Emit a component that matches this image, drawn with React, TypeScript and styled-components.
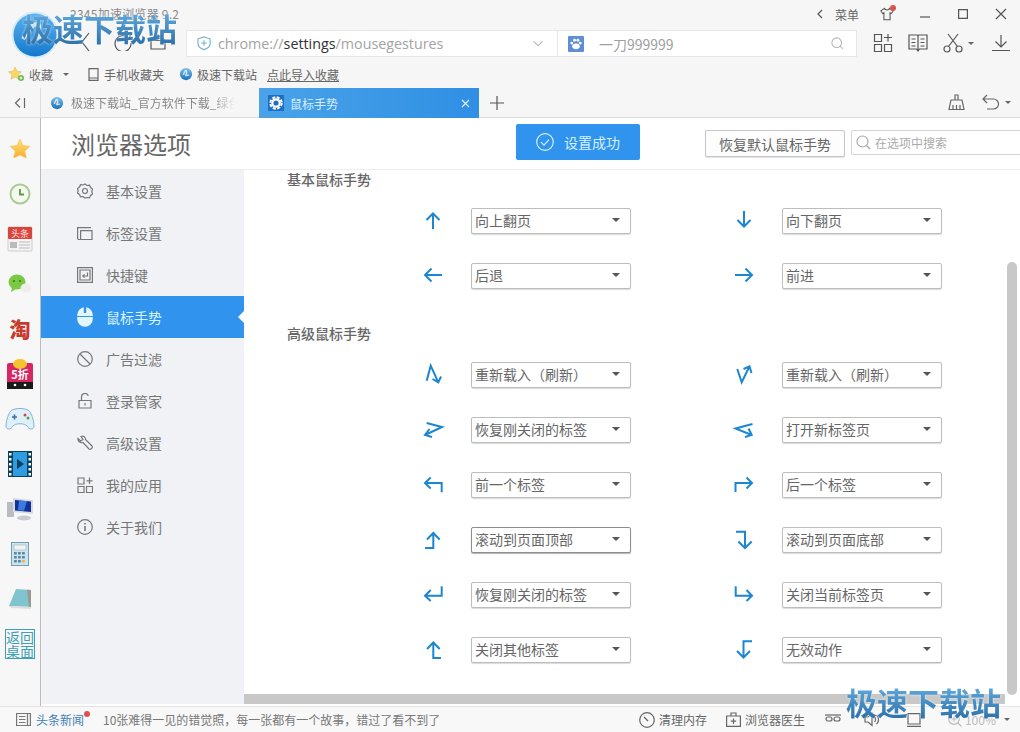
import React from "react";
import styled, { createGlobalStyle } from "styled-components";

const Global = createGlobalStyle`
  html, body { margin: 0; padding: 0; background: #f6f6f6; }
  body { font-family: "Noto Sans CJK SC", "Noto Sans", sans-serif; color: #666; }
  * { box-sizing: border-box; }
`;

const Page = styled.div`
  position: relative; width: 1020px; height: 732px; overflow: hidden;
  display: flex; flex-direction: column; background: #f6f6f6;
`;
const TitleRow = styled.div`
  height: 28px; display: flex; align-items: center; padding-left: 70px; flex: none;
`;
const AppTitle = styled.div`font-size: 12px; color: #888; line-height: 28px; letter-spacing: .25px;`;
const WindowControls = styled.div`
  margin-left: auto; display: flex; align-items: center; height: 28px; color: #555;
`;
const MenuLabel = styled.span`font-size: 12px; color: #666; margin: 0 21px 0 10px;`;
const SkinWrap = styled.span`position: relative; display: inline-flex; margin-right: 12px;`;
const RedDot = styled.span<{ $size: number }>`
  position: absolute; right: -2px; top: -2px; width: ${p => p.$size}px; height: ${p => p.$size}px;
  background: #d9534f; border-radius: 50%;
`;
const WinButton = styled.span`width: 38px; height: 28px; display: flex; align-items: center; justify-content: center;`;

const ToolRow = styled.div`
  height: 32px; display: flex; align-items: flex-start; flex: none; padding-left: 76px; color: #555;
`;
const NavGroup = styled.div`display: flex; gap: 18px; align-items: center; height: 28px; width: 110px; flex: none;`;
const AddressBox = styled.div`
  width: 671px; height: 27px; margin-top: 2px; background: #fff; border: 1px solid #e6e6e6;
  display: flex; align-items: center; flex: none;
`;
const UrlPart = styled.div`
  width: 371px; flex: none; height: 100%; display: flex; align-items: center; padding: 0 11px 0 10px;
  border-right: 1px solid #e6e6e6; color: #74b3c7;
`;
const UrlText = styled.div`
  font-family: "Open Sans", sans-serif; font-size: 14.3px; color: #a3a3a3; margin-left: 6px; flex: 1;
`;
const UrlStrong = styled.span`color: #333;`;
const Dim = styled.span`color: #b5b5b5; display: inline-flex;`;
const SearchPart = styled.div`flex: 1; height: 100%; display: flex; align-items: center; padding: 0 11px 0 10px;`;
const SearchValue = styled.span`font-size: 14px; color: #a0a0a0; margin-left: 15px; flex: 1;`;
const ToolIcons = styled.div`
  display: flex; align-items: center; height: 28px; margin: 1px 0 0 16px; gap: 15px; color: #555;
`;
const ToolCaret = styled.span`
  display: inline-block; border: 3px solid transparent; border-top-color: #666; border-bottom: none;
  margin-left: 5px;
`;
const IconWithCaret = styled.span<{ $after?: number }>`
  display: inline-flex; align-items: center; margin-right: ${p => p.$after ?? 0}px;
`;

const BookmarkRow = styled.div`
  height: 28px; flex: none; display: flex; align-items: center; padding-left: 8px; font-size: 12px; color: #666;
`;
const Bookmark = styled.span<{ $w: number }>`
  display: inline-flex; align-items: center; gap: 4px; width: ${p => p.$w}px;
`;
const BookmarkCaret = styled(ToolCaret)`margin-left: 6px;`;
const Imported = styled.span`text-decoration: underline;`;

const TabRow = styled.div`
  height: 30px; flex: none; display: flex; align-items: stretch; border-bottom: 1px solid #dcdcdc;
`;
const Collapse = styled.div`width: 41px; display: flex; align-items: center; justify-content: center; color: #666; border-right: 1px solid #dcdcdc;`;
const Tab = styled.div`
  width: 218px; display: flex; align-items: center; padding-left: 9px; gap: 7px; font-size: 12px; color: #888;
  overflow: hidden; white-space: nowrap;
`;
const TabFade = styled.span`
  display: block; flex: none;
  -webkit-mask-image: linear-gradient(to right, #000 140px, transparent 164px);
  mask-image: linear-gradient(to right, #000 140px, transparent 164px);
`;
const ActiveTab = styled.div`
  width: 220px; display: flex; align-items: center; padding: 0 9px; gap: 6px; font-size: 12px; color: #d8eeff;
  background: linear-gradient(to right, #4aa3e8, #2f8fe4); margin-bottom: -1px;
`;
const TabClose = styled.span`margin-left: auto; display: flex; color: #dff0ff;`;
const NewTab = styled.div`width: 36px; display: flex; align-items: center; justify-content: center; color: #555;`;
const TabTools = styled.div`margin-left: auto; display: flex; align-items: center; gap: 17px; padding-right: 9px; color: #666;`;

const Body = styled.div`flex: 1; display: flex; min-height: 0;`;
const Rail = styled.div`
  width: 41px; flex: none; border-right: 1px solid #bcbcbc; background: #f7f7f7;
  display: flex; flex-direction: column; padding-top: 8px;
`;
const RailItem = styled.div`height: 45px; flex: none; display: flex; align-items: center; justify-content: center;`;
const TaoGlyph = styled.span`font-size: 21px; font-weight: 900; color: #c93a2e; line-height: 1;`;
const DesktopBox = styled.div`
  width: 30px; height: 30px; border: 1px solid #3f9fb5; color: #3f9fb5; font-size: 14px; line-height: 14px;
  text-align: center; letter-spacing: 0;
`;

const Main = styled.div`flex: 1; display: flex; flex-direction: column; min-width: 0; background: #fff;`;
const OptionsHead = styled.div`
  height: 52px; flex: none; display: flex; align-items: center; padding-left: 30px; border-bottom: 1px solid #eeeeee; background: #fff;
`;
const OptionsTitle = styled.h1`
  margin: 0; width: 445px; flex: none; font-size: 24px; font-weight: 400; color: #666; line-height: 52px;
`;
const SavedBadge = styled.div`
  width: 124px; height: 36px; margin-top: -4px; background: #3094ee; border-radius: 2px; color: #d6f1ff; flex: none;
  display: flex; align-items: center; justify-content: center; gap: 10px; font-size: 14px;
`;
const RestoreButton = styled.button`
  width: 140px; height: 27px; margin-left: 65px; border: 1px solid #c6c6c6; border-radius: 2px; flex: none;
  background: #fdfdfd; font: inherit; font-size: 14px; color: #666; padding: 0;
  box-shadow: 0 1px 1px rgba(0,0,0,.12);
`;
const OptionSearch = styled.div`
  width: 175px; height: 25px; margin-left: 6px; margin-top: -2px; border: 1px solid #d4d4d4; border-radius: 2px;
  display: flex; align-items: center; padding-left: 4px; gap: 4px; font-size: 12px; color: #aaa; flex: none;
`;
const Split = styled.div`flex: 1; display: flex; min-height: 0;`;
const Nav = styled.nav`width: 203px; flex: none; background: #f0f2f6; color: #777;`;
const NavItem = styled.div<{ $active?: boolean }>`
  position: relative; height: 42px; display: flex; align-items: center; padding-left: 36px; gap: 13px; font-size: 14px;
  color: ${p => (p.$active ? "#d9f3ff" : "#777")};
  background: ${p => (p.$active ? "#3094ee" : "transparent")};
  ${p => p.$active && `&::after {
    content: ""; position: absolute; right: 0; top: 15px; border: 6px solid transparent; border-right-color: #fff; border-left: none;
  }`}
`;
const Content = styled.div`position: relative; flex: 1; background: #fff; padding-left: 43px; overflow: hidden;`;
const Heading = styled.h2<{ $top: number }>`
  margin: ${p => p.$top}px 0 0; font-size: 14px; line-height: 16px; font-weight: 500; color: #666;
`;
const Rows = styled.div<{ $top: number }>`margin-top: ${p => p.$top}px; margin-left: 134px;`;
const Row = styled.div`display: grid; grid-template-columns: 311px 311px;`;
const Cell = styled.div`display: flex; align-items: flex-start; height: 55px;`;
const Arrow = styled.svg`
  width: 24px; height: 24px; margin-top: 15px; margin-right: 26px; flex: none;
  fill: none; stroke: #1c86d1; stroke-width: 2; stroke-linejoin: miter;
`;
const Select = styled.div<{ $focus?: boolean }>`
  width: 160px; height: 26px; margin-top: 15px; display: flex; align-items: center; justify-content: space-between;
  padding: 0 10px 2px 3px; font-size: 14px; color: #666; background: #fff; border-radius: 2px;
  border: 1px solid ${p => (p.$focus ? "#8e8e8e" : "#bdbdbd")};
  box-shadow: 0 1px 1px rgba(0,0,0,${p => (p.$focus ? 0.3 : 0.15)});
  white-space: pre;
`;
const SelectCaret = styled.span`border: 4px solid transparent; border-top: 4px solid #555; border-bottom: none; border-left-width: 4.5px; border-right-width: 4.5px;`;
const VScroll = styled.div`
  position: absolute; right: 3px; top: 92px; width: 10px; height: 433px; background: #c8c8c8; border-radius: 5px;
`;
const HScroll = styled.div`
  position: absolute; left: 0; right: 15px; bottom: 0; height: 10px; background: #c8c8c8;
`;
const ScrollGap = styled.div`height: 2px; flex: none;`;

const StatusBar = styled.div`
  height: 26px; flex: none; display: flex; align-items: center; background: #f8f8f8; border-top: 1px solid #e4e4e4;
  padding-left: 16px; font-size: 12px; color: #777;
`;
const NewsLabel = styled.span`position: relative; color: #3f7fb8; margin: 0 19px 0 5px;`;
const NewsDot = styled(RedDot)`right: -6px; top: 0;`;
const StatusRight = styled.div`margin-left: auto; display: flex; align-items: center; padding-right: 10px;`;
const StatusItem = styled.span<{ $gap: number }>`
  display: inline-flex; align-items: center; gap: 4px; margin-left: ${p => p.$gap}px; color: #666;
`;
const Muted = styled.span`color: #bbb; display: inline-flex; align-items: center; gap: 3px;`;

const Watermark = styled.div<{ $left: number; $top: number }>`
  position: absolute; left: ${p => p.$left}px; top: ${p => p.$top}px; font-size: 31px; font-weight: 700; line-height: 36px;
  white-space: nowrap; letter-spacing: 0;
  background: linear-gradient(to bottom, #62aee2, #2c6fa8);
  -webkit-background-clip: text; background-clip: text; color: transparent;
  filter: drop-shadow(0 0 1px rgba(255,255,255,.7));
`;
const Logo = styled.svg`position: absolute; left: 11px; top: 11px; width: 48px; height: 48px;`;

const Line = styled.svg`fill: none; stroke: currentColor; stroke-width: 1.2; flex: none; display: block;`;

const I = ({ s = 16, v = 16, h, d, children }: { s?: number; v?: number; h?: number; d?: string; children?: React.ReactNode }) => (
  <Line width={s} height={h ?? s} viewBox={`0 0 ${v} ${v}`}>
    {d && <path d={d} />}
    {children}
  </Line>
);

const arrows: Record<string, string> = {
  up: "M12 21V5.5M5.5 12L12 5.5L18.5 12",
  down: "M12 3V18.5M5.5 12L12 18.5L18.5 12",
  left: "M21 12H4M10.5 5.5L4 12L10.5 18.5",
  right: "M3 12H20M13.5 5.5L20 12L13.5 18.5",
  nLeft: "M5.7 18.7L9.7 3.7L17.3 20.3M11.5 17L17.3 20.3L20 14.5",
  nRight: "M5.3 7L9.7 20.3L17.5 4.3M11.5 7L17.5 4.3L19.5 11",
  zLeft: "M5.7 6L21 10L4 18M8.5 12L4 18L11 20",
  zRight: "M20.5 7L3.5 11.5L19.7 18M16.5 11.5L19.7 18L13 20",
  backUp: "M20.7 20.3V11H4M9.7 5.5L4 11L9.7 16.5",
  fwdUp: "M3.5 20V11H20M14.5 5.5L20 11L14.5 16.5",
  footLeft: "M4 21H12.3V6.5M6 12.5L12.3 6L18.7 12.5",
  topDown: "M4 4.7H13V21M6.3 14.5L13 21L19.7 14.5",
  enter: "M20.7 4.3V13.7H4M9.7 8L4 13.7L9.7 19",
  hook: "M3.7 4.3V13.7H20M14.5 8L20 13.7L14.5 19",
  footRight: "M20 21H12.3V5.5M6 12L12.3 5.5L18.7 12",
  topRightDown: "M20 4.3H11.5V20.5M5 14L11.5 20.5L18 14",
};

type G = { a: string; t: string; focus?: boolean };
const basic: [G, G][] = [
  [{ a: "up", t: "向上翻页" }, { a: "down", t: "向下翻页" }],
  [{ a: "left", t: "后退" }, { a: "right", t: "前进" }],
];
const advanced: [G, G][] = [
  [{ a: "nLeft", t: "重新载入（刷新）" }, { a: "nRight", t: "重新载入（刷新）" }],
  [{ a: "zLeft", t: "恢复刚关闭的标签" }, { a: "zRight", t: "打开新标签页" }],
  [{ a: "backUp", t: "前一个标签" }, { a: "fwdUp", t: "后一个标签" }],
  [{ a: "footLeft", t: "滚动到页面顶部", focus: true }, { a: "topDown", t: "滚动到页面底部" }],
  [{ a: "enter", t: "恢复刚关闭的标签" }, { a: "hook", t: "关闭当前标签页" }],
  [{ a: "footRight", t: "关闭其他标签" }, { a: "topRightDown", t: "无效动作" }],
];

const GestureRows = ({ rows, top }: { rows: [G, G][]; top: number }) => (
  <Rows $top={top}>
    {rows.map((r, i) => (
      <Row key={i}>
        {r.map((g, j) => (
          <Cell key={j}>
            <Arrow viewBox="0 0 24 24"><path d={arrows[g.a]} /></Arrow>
            <Select $focus={g.focus}>{g.t}<SelectCaret /></Select>
          </Cell>
        ))}
      </Row>
    ))}
  </Rows>
);

const MiniGlobe = ({ s = 16 }: { s?: number }) => (
  <svg width={s} height={s} viewBox="0 0 16 16" style={{ flex: "none" }}>
    <defs><linearGradient id="gl" x1="0" y1="0" x2="0" y2="1"><stop offset="0" stopColor="#7cc0ef" /><stop offset="1" stopColor="#1a6fc0" /></linearGradient></defs>
    <circle cx="8" cy="8" r="7" fill="url(#gl)" />
    <path d="M5 9c1-3 2-5 3-5s1 3 0 5 3-1 3 1" stroke="#d8e6ef" strokeWidth="1.6" fill="none" />
  </svg>
);

const navItems: { t: string; icon: React.ReactNode; active?: boolean }[] = [
  { t: "基本设置", icon: <I s={16} d="M8 1l2 1.500 2.500-.3 1 2.300 2 1.500-.7 2.500.7 2.500-2 1.500-1 2.300-2.500-.3L8 15l-2-1.500-2.500.3-1-2.300-2-1.500L1.200 8 .5 5.500l2-1.500 1-2.300L6 2z M8 5.500a2.500 2.500 0 1 0 0 5 2.500 2.500 0 0 0 0-5z" /> },
  { t: "标签设置", icon: <I s={16} d="M.6 14V2.600H14M3.600 14.500V5.600H15V14.500H.6" /> },
  { t: "快捷键", icon: <I s={16} d="M.6.6H15.400V15.400H.6zM3 3H13V13H3zM10.500 5.500V9H6M7.500 7.300L5.800 9l1.700 1.700" /> },
  {
    t: "鼠标手势", active: true,
    icon: (
      <svg width="16" height="20" viewBox="0 0 16 20" style={{ flex: "none" }}>
        <path d="M.2 10H15.800V12a7.800 7.800 0 0 1-15.600 0zM.2 9V8A7.800 7.800 0 0 1 6.800.3V6h2.400V.3A7.800 7.800 0 0 1 15.800 8v1z" fill="#e3f5ff" />
      </svg>
    ),
  },
  { t: "广告过滤", icon: <I s={16}><circle cx="8" cy="8" r="7.300" /><path d="M3 3l10 10" /></I> },
  { t: "登录管家", icon: <I s={16} d="M2 7.500H14V15H2zM4.500 7.500V4a3.500 3.500 0 0 1 6.800-1.200M8 10v2.500" /> },
  { t: "高级设置", icon: <I s={16} d="M1 3.500L3.500 6 6 4.500 4 1.500C6 .5 8.500 1.500 8.500 4.500L15 11c1 1.500-1 4-3 3L6 7.500C3 8.500.5 6 1 3.500z" /> },
  { t: "我的应用", icon: <I s={16} d="M1 1H7V7H1zM1 9.500H7V15.500H1zM9.500 9.500H15.500V15.500H9.500zM12.500 .5V7M9.500 3.800H15.500" /> },
  { t: "关于我们", icon: <I s={16}><circle cx="8" cy="8" r="7.300" /><path d="M8 7v5M8 4v1.500" strokeWidth="1.600" /></I> },
];

const rail: React.ReactNode[] = [
  <svg key="star" width="22" height="22" viewBox="0 0 22 22"><defs><linearGradient id="st" x1="0" y1="0" x2="0" y2="1"><stop offset="0" stopColor="#ffe27a" /><stop offset="1" stopColor="#f6ad2e" /></linearGradient></defs><path d="M11 1l3 6.500 7 .8-5.200 4.800 1.500 7L11 17l-6.300 3.100 1.500-7L1 8.300l7-.8z" fill="url(#st)" stroke="#eec460" strokeWidth=".6" /></svg>,
  <svg key="clock" width="22" height="22" viewBox="0 0 22 22"><circle cx="11" cy="11" r="9.500" fill="#f4f8ee" stroke="#aacb93" strokeWidth="2" /><path d="M11 6v5.500h4" stroke="#5b9a3f" strokeWidth="1.800" fill="none" /></svg>,
  <svg key="news" width="24" height="24" viewBox="0 0 24 24" style={{ overflow: "visible" }}><rect width="24" height="24" rx="1" fill="#f4f4f4" stroke="#ccc" /><rect width="24" height="12" rx="1" fill="#d9443c" /><text x="12" y="9.500" fontSize="9" textAnchor="middle" fill="#ffe4e0" fontFamily="Noto Sans CJK SC, sans-serif">头条</text><rect x="2" y="15" width="7" height="6" fill="#bbb" /><path d="M11 15h11M11 18h11M11 21h11" stroke="#bbb" /></svg>,
  <svg key="wechat" width="24" height="20" viewBox="0 0 24 20"><ellipse cx="9" cy="8" rx="8.500" ry="7.500" fill="#7ac943" /><path d="M4 13l-1 5 5-3z" fill="#7ac943" /><circle cx="6" cy="7" r="1" fill="#3d7a18" /><circle cx="12" cy="7" r="1" fill="#3d7a18" /><ellipse cx="18" cy="14" rx="5.500" ry="4.500" fill="#eeeeee" /></svg>,
  <TaoGlyph key="tao">淘</TaoGlyph>,
  <svg key="five" width="26" height="30" viewBox="0 0 26 30"><rect y="4" width="26" height="26" rx="2" fill="#d92561" /><ellipse cx="13" cy="5" rx="7" ry="5" fill="#f7c32e" /><rect y="23" width="26" height="7" fill="#1b1b1b" /><circle cx="8" cy="26" r="1.300" fill="#fff" /><circle cx="18" cy="26" r="1.300" fill="#fff" /><text x="13" y="20" fontSize="11" fontWeight="700" textAnchor="middle" fill="#fff" fontFamily="Noto Sans CJK SC, sans-serif">5折</text></svg>,
  <svg key="pad" width="30" height="22" viewBox="0 0 30 22"><path d="M7 2c5-2 11-2 16 0 3 1 6 11 6 16 0 4-5 4-7 0-2-3-12-3-14 0-2 4-7 4-7 0C1 13 4 3 7 2z" fill="#dff0fb" stroke="#7eb6d8" /><path d="M7 9h5M9.500 6.500v5" stroke="#3d6f9e" strokeWidth="1.600" /><circle cx="20" cy="7" r="1.500" fill="#d9443c" /><circle cx="23" cy="10" r="1.500" fill="#5aa04a" /></svg>,
  <svg key="film" width="24" height="26" viewBox="0 0 24 26"><rect width="24" height="26" fill="#0b3f5e" /><rect x="5" y="1" width="14" height="24" fill="#2f9be0" /><path d="M9 8l7 5-7 5z" fill="#0b3f5e" />{[2, 7, 12, 17, 22].map(y => <g key={y}><rect x="1" y={y} width="2.500" height="2.500" fill="#fff" /><rect x="20.500" y={y} width="2.500" height="2.500" fill="#fff" /></g>)}</svg>,
  <svg key="pc" width="28" height="24" viewBox="0 0 28 24"><rect x="1" y="5" width="7" height="15" fill="#b8bdc4" /><path d="M7 1l20 2v14L7 15z" fill="#d7dbe0" /><path d="M9 3l16 1.600V15L9 13.500z" fill="#14309a" /><path d="M13 3.500l8 .8-3 9.500-6-.5z" fill="#3a7ae0" /><ellipse cx="18" cy="21" rx="7" ry="2.500" fill="#c8ccd2" /></svg>,
  <svg key="calc" width="18" height="24" viewBox="0 0 18 24"><rect x=".5" y=".5" width="17" height="23" fill="#cfe3ee" stroke="#6d9fb8" /><rect x="3" y="3" width="12" height="5" fill="#f2f2f2" stroke="#8aa" strokeWidth=".5" />{[10, 14, 18].map(y => [3, 7, 11].map(x => <rect key={`${x}${y}`} x={x} y={y} width="2.800" height="2.500" fill={x === 11 && y === 18 ? "#e8b64a" : "#5b8ba6"} />))}</svg>,
  <svg key="note" width="24" height="22" viewBox="0 0 24 22"><path d="M8 1l15 1v17L1 18z" fill="#7fc4cf" /><path d="M1 18l22 1v2L3 20z" fill="#ddd" /><path d="M19 1.800l4 .2v17l-2-.5z" fill="#9a9a8c" /></svg>,
  <DesktopBox key="desk">返回<br />桌面</DesktopBox>,
];

export default function App() {
  return (
    <Page>
      <Global />
      <TitleRow>
        <AppTitle>2345加速浏览器 9.2</AppTitle>
        <WindowControls>
          <I s={10} v={10} d="M7 1L3 5l4 4" />
          <MenuLabel>菜单</MenuLabel>
          <SkinWrap>
            <I s={14} d="M5 1.500L1 4.500l2 3 1.500-1V14.500H11.500V6.500L13 7.500l2-3-4-3C10 4 6 4 5 1.500z" />
            <RedDot $size={6} />
          </SkinWrap>
          <WinButton><I s={10} v={10} d="M0 8H10" /></WinButton>
          <WinButton><I s={10} v={10} d="M.6.6H9.400V9.400H.6z" /></WinButton>
          <WinButton><I s={12} v={12} d="M1 1l10 10M11 1L1 11" /></WinButton>
        </WindowControls>
      </TitleRow>

      <ToolRow>
        <NavGroup>
          <I s={20} v={20} d="M13 1L6 10l7 9" />
          <I s={18} v={18}><path d="M15.500 6A8 8 0 1 0 17 10M16 2v4.500h-4.500" /></I>
          <I s={16} d="M8 1L1 6.500V15H15V6.500zM1.500 6.500H14.500" />
        </NavGroup>
        <AddressBox>
          <UrlPart>
            <I s={15} d="M7.500 1L14 3v5c0 3-3 5.500-6.500 6.500C4 13.500 1 11 1 8V3zM4.500 7.500h6M7.500 4.500v6" />
            <UrlText>chrome://<UrlStrong>settings</UrlStrong>/mousegestures</UrlText>
            <Dim><I s={14} d="M2 5l5 5 5-5" /></Dim>
          </UrlPart>
          <SearchPart>
            <svg width="16" height="16" viewBox="0 0 17 17" style={{ flex: "none" }}>
              <rect width="17" height="17" fill="#5f8fd0" rx="1" />
              <ellipse cx="8.500" cy="11" rx="4" ry="3" fill="#fff" />
              <circle cx="4" cy="7.500" r="1.500" fill="#fff" /><circle cx="7" cy="4.500" r="1.500" fill="#fff" />
              <circle cx="10.500" cy="4.500" r="1.500" fill="#fff" /><circle cx="13" cy="7.500" r="1.500" fill="#fff" />
            </svg>
            <SearchValue>一刀999999</SearchValue>
            <Dim><I s={14}><circle cx="6.500" cy="6.500" r="5.500" /><path d="M10.500 10.500l3 3" /></I></Dim>
          </SearchPart>
        </AddressBox>
        <ToolIcons>
          <I s={20} v={20} d="M1.500 1.500H8.500V8.500H1.500zM1.500 11.500H8.500V18.500H1.500zM11.500 11.500H18.500V18.500H11.500zM15 1v7.500M11 4.500H19" />
          <I s={20} v={20} d="M1 2H9c.6 0 1 .4 1 1 0-.6.4-1 1-1H19V16H11.500L10 18 8.500 16H1zM10 3V17M3.500 6H7.500M3.500 9.500H7.500M3.500 13H7.500M12.500 6H16.500M12.500 9.500H16.500M12.500 13H16.500" />
          <IconWithCaret $after={3}>
            <I s={20} v={20}><circle cx="4" cy="16" r="3" /><circle cx="16" cy="16" r="3" /><path d="M5.500 13.500L15 1M14.500 13.500L5 1" /></I>
            <ToolCaret />
          </IconWithCaret>
          <I s={18} v={18} d="M9 1V13M3.500 7.500L9 13l5.500-5.500M0 16.500H18" />
        </ToolIcons>
      </ToolRow>

      <BookmarkRow>
        <Bookmark $w={79}>
          <svg width="17" height="16" viewBox="0 0 17 16" style={{ flex: "none" }}>
            <path d="M7 1l2 4.300 4.500.5-3.400 3 1 4.500L7 11 2.900 13.300l1-4.500-3.400-3 4.500-.5z" fill="#f7d768" stroke="#d9b54a" strokeWidth=".5" />
            <circle cx="13" cy="12" r="3" fill="#6bb94a" /><path d="M11.500 12h3M13 10.500v3" stroke="#fff" />
          </svg>
          收藏
          <BookmarkCaret />
        </Bookmark>
        <Bookmark $w={92}>
          <I s={13} v={13} d="M2 .6H11V12.400H2zM2 10H11" />
          手机收藏夹
        </Bookmark>
        <Bookmark $w={88}>
          <MiniGlobe s={14} />
          极速下载站
        </Bookmark>
        <Imported>点此导入收藏</Imported>
      </BookmarkRow>

      <TabRow>
        <Collapse><I s={12} v={12} d="M6 1.500L1.500 6 6 10.500M10.500 1V11" /></Collapse>
        <Tab>
          <MiniGlobe s={14} />
          <TabFade>极速下载站_官方软件下载_绿色</TabFade>
        </Tab>
        <ActiveTab>
          <svg width="16" height="16" viewBox="0 0 16 16" style={{ flex: "none" }}>
            <rect width="16" height="16" fill="#1e6fc8" />
            <circle cx="8" cy="8" r="5.700" fill="none" stroke="#fff" strokeWidth="2" strokeDasharray="3 1.480" />
            <circle cx="8" cy="8" r="3.700" fill="none" stroke="#fff" strokeWidth="2.200" />
          </svg>
          鼠标手势
          <TabClose><I s={9} v={9} d="M1 1l7 7M8 1L1 8" /></TabClose>
        </ActiveTab>
        <NewTab><I s={14} v={14} d="M7 0V14M0 7H14" /></NewTab>
        <TabTools>
          <I s={17} v={17} d="M7 1H10V6H7zM3 6H14L16 15.500H1zM1 15.500H16M5 11V15.500M8.500 11V15.500M12 11V15.500" />
          <IconWithCaret>
            <I s={18} v={18} d="M5 1L1 5l4 4M1 5H11.500a5 5 0 0 1 0 10H5" />
            <ToolCaret />
          </IconWithCaret>
        </TabTools>
      </TabRow>

      <Body>
        <Rail>{rail.map((r, i) => <RailItem key={i}>{r}</RailItem>)}</Rail>
        <Main>
          <OptionsHead>
            <OptionsTitle>浏览器选项</OptionsTitle>
            <SavedBadge>
              <I s={18} v={18}><circle cx="9" cy="9" r="8.300" /><path d="M5 9.200l3 3 5-5.500" /></I>
              设置成功
            </SavedBadge>
            <RestoreButton>恢复默认鼠标手势</RestoreButton>
            <OptionSearch>
              <I s={15} v={15}><circle cx="6.500" cy="6.500" r="5.500" /><path d="M10.500 10.500l3.500 3.500" /></I>
              在选项中搜索
            </OptionSearch>
          </OptionsHead>
          <Split>
            <Nav>
              {navItems.map(n => (
                <NavItem key={n.t} $active={n.active}>
                  {n.icon}
                  {n.t}
                </NavItem>
              ))}
            </Nav>
            <Content>
              <Heading $top={1}>基本鼠标手势</Heading>
              <GestureRows rows={basic} top={6} />
              <Heading $top={22}>高级鼠标手势</Heading>
              <GestureRows rows={advanced} top={6} />
              <VScroll />
              <HScroll />
            </Content>
          </Split>
          <ScrollGap />
        </Main>
      </Body>

      <StatusBar>
        <I s={15} v={15} d="M.6 1.500H14.400V13.500H.6zM3 4.500H9.500M3 7.500H9.500M3 10.500H9.500M11.500 1.500V13.500" />
        <NewsLabel>头条新闻<NewsDot $size={6} /></NewsLabel>
        10张难得一见的错觉照，每一张都有一个故事，错过了看不到了
        <StatusRight>
          <StatusItem $gap={0}><I s={16}><circle cx="8" cy="8" r="7.300" /><path d="M5 5l4 4" /></I>清理内存</StatusItem>
          <StatusItem $gap={19}><I s={15} v={15} d="M.6 4H14.400V14.400H.6zM5 4V1H10V4M7.500 6.500V12M4.800 9.200H10.200" />浏览器医生</StatusItem>
          <StatusItem $gap={19}><I s={18} v={18}><path d="M1 4H17" /><rect x="2" y="6" width="6" height="4" rx="2" /><rect x="10" y="6" width="6" height="4" rx="2" /></I></StatusItem>
          <StatusItem $gap={22}><I s={15} v={15} d="M1 5H4L8 1.500V13.500L4 10H1zM10.500 5a3.500 3.500 0 0 1 0 5M12.500 3a6 6 0 0 1 0 9" /></StatusItem>
          <StatusItem $gap={28}><I s={14} v={14} d="M1 .6H13V11H1zM0 13.400H14" /></StatusItem>
          <StatusItem $gap={27}><Muted><I s={14} v={14}><circle cx="6" cy="6" r="5.300" /><path d="M3.500 6h5M6 3.500v5M10 10l3.500 3.500" /></I>100%<ToolCaret /></Muted></StatusItem>
        </StatusRight>
      </StatusBar>

      <Logo viewBox="0 0 48 48">
        <defs>
          <linearGradient id="lg" x1="0" y1="0" x2="0" y2="1">
            <stop offset="0" stopColor="#58b2ee" /><stop offset="1" stopColor="#1478cc" />
          </linearGradient>
        </defs>
        <circle cx="24" cy="24" r="23.500" fill="#d6ebf8" />
        <circle cx="24" cy="24" r="21.500" fill="url(#lg)" />
        <path d="M12 28c5-8 9-15 14-15 4 0 2 9-1 15 4-3 8-4 9-1" stroke="#cfe3ee" strokeWidth="4" fill="none" />
      </Logo>
      <Watermark $left={22} $top={10}>极速下载站</Watermark>
      <Watermark $left={846} $top={684}>极速下载站</Watermark>
    </Page>
  );
}
